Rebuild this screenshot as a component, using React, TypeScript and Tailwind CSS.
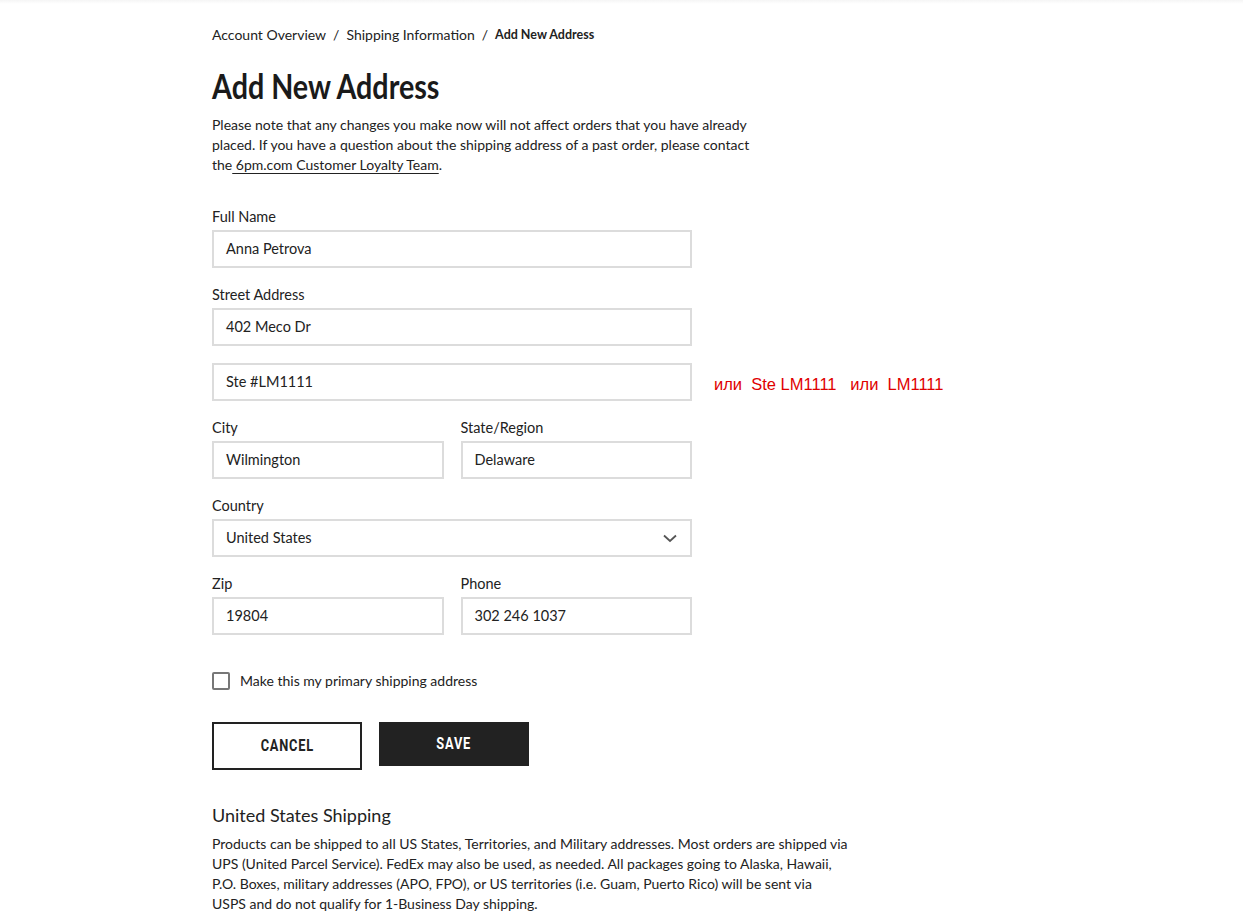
import React from "react";

const Label = ({ children }: { children: React.ReactNode }) => (
  <div className="text-[14.5px] leading-[18px] text-[#222] mb-[4px]">{children}</div>
);

const Field = ({ value, className = "" }: { value: string; className?: string }) => (
  <div className={`h-[38px] border-2 border-[#dcdcdc] flex items-center px-[12px] text-[14.5px] text-[#222] ${className}`}>
    {value}
  </div>
);

const roboto = { fontFamily: "Roboto, 'Liberation Sans', sans-serif" };

export default function App() {
  return (
    <div className="min-h-[921px] bg-white" style={{ fontFamily: "Lato, 'Noto Sans', sans-serif" }}>
      <div className="h-[4px] bg-gradient-to-b from-[#f5f5f5] to-white" />
      <div className="pl-[212px] pt-[22px]">
        <nav className="flex items-center text-[14px] leading-[18px] text-[#222]">
          <span>Account Overview</span>
          <span className="mx-[7px]">/</span>
          <span>Shipping Information</span>
          <span className="mx-[7px]">/</span>
          <span className="font-bold text-[12.5px]">Add New Address</span>
        </nav>
        <h1 className="mt-[21px] text-[35px] leading-[40px] font-bold text-[#1a1a1a]">
          <span className="inline-block origin-left scale-x-[0.82] whitespace-nowrap">Add New Address</span>
        </h1>
        <p className="mt-[10px] w-[545px] text-[14px] leading-[20px] text-[#222]">
          Please note that any changes you make now will not affect orders that you have already placed. If you have a question about the shipping address of a past order, please contact the
          <span className="underline underline-offset-[3px]"> 6pm.com Customer Loyalty Team</span>.
        </p>

        <div className="mt-[33px] w-[480px]">
          <Label>Full Name</Label>
          <Field value="Anna Petrova" />

          <div className="mt-[18px]">
            <Label>Street Address</Label>
            <Field value="402 Meco Dr" />
          </div>

          <div className="mt-[17px] relative">
            <Field value="Ste #LM1111" />
            <div
              className="absolute left-[502px] top-[9px] whitespace-pre text-[16.5px] text-[#e00000]"
              style={{ fontFamily: "'Liberation Sans', Arial, sans-serif" }}
            >
              {"или  Ste LM1111   или  LM1111"}
            </div>
          </div>

          <div className="mt-[18px] grid grid-cols-2 gap-[17px]">
            <div>
              <Label>City</Label>
              <Field value="Wilmington" />
            </div>
            <div>
              <Label>State/Region</Label>
              <Field value="Delaware" />
            </div>
          </div>

          <div className="mt-[18px]">
            <Label>Country</Label>
            <div className="h-[38px] border-2 border-[#dcdcdc] flex items-center justify-between px-[12px] text-[14.5px] text-[#222]">
              <span>United States</span>
              <svg width="14" height="9" viewBox="0 0 14 9" fill="none" className="mr-[1px]">
                <path d="M1 1.5L7 7L13 1.5" stroke="#555" strokeWidth="1.8" />
              </svg>
            </div>
          </div>

          <div className="mt-[18px] grid grid-cols-2 gap-[17px]">
            <div>
              <Label>Zip</Label>
              <Field value="19804" />
            </div>
            <div>
              <Label>Phone</Label>
              <Field value="302 246 1037" />
            </div>
          </div>

          <div className="mt-[35px] flex items-center">
            <div className="w-[18px] h-[18px] border-2 border-[#777] rounded-[2px]" />
            <span className="ml-[10px] text-[14px] text-[#222]">Make this my primary shipping address</span>
          </div>

          <div className="mt-[31px] flex gap-[17px] items-start">
            <button
              className="w-[150px] h-[48px] border-2 border-[#222] bg-white text-[16px] font-bold tracking-[1px] text-[#222] flex items-center justify-center"
              style={roboto}
            >
              <span className="inline-block scale-x-[0.8]">CANCEL</span>
            </button>
            <button
              className="w-[150px] h-[44px] bg-[#222] text-white text-[16px] font-bold tracking-[1px] flex items-center justify-center"
              style={roboto}
            >
              <span className="inline-block scale-x-[0.8]">SAVE</span>
            </button>
          </div>
        </div>

        <h2 className="mt-[32px] text-[18px] leading-[26px] text-[#222]">United States Shipping</h2>
        <p className="mt-[6px] w-[636px] text-[14px] leading-[20px] text-[#222]">
          Products can be shipped to all US States, Territories, and Military addresses. Most orders are shipped via UPS (United Parcel Service). FedEx may also be used, as needed. All packages going to Alaska, Hawaii, P.O. Boxes, military addresses (APO, FPO), or US territories (i.e. Guam, Puerto Rico) will be sent via USPS and do not qualify for 1-Business Day shipping.
        </p>
      </div>
    </div>
  );
}
